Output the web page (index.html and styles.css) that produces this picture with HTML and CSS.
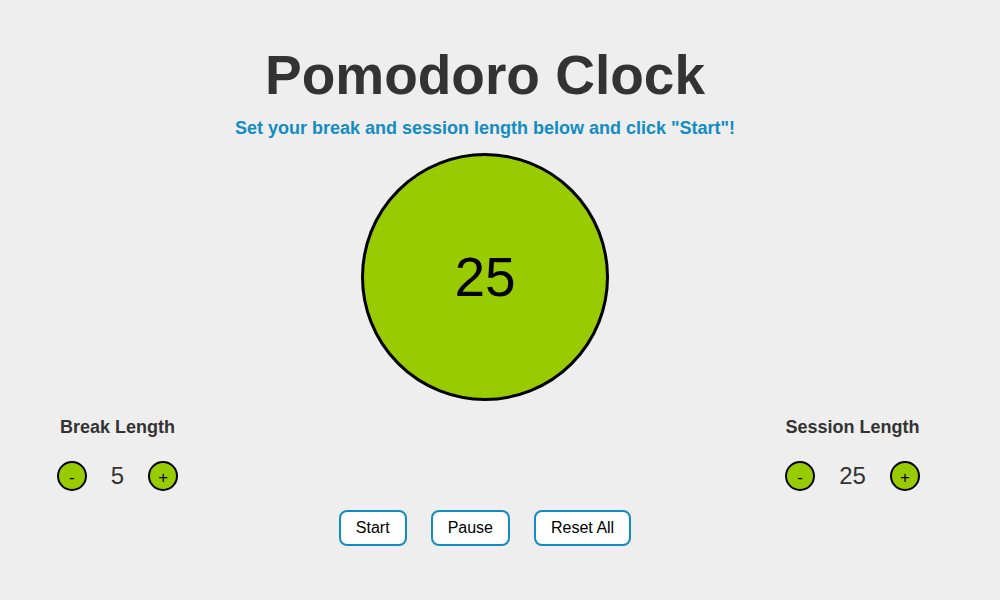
FILE: index.html
```html
<!DOCTYPE html>
<html>
<head>
<meta charset="utf-8">
<title>Pomodoro Clock</title>
<link rel="stylesheet" href="styles.css">
</head>
<body>
<div class="page">
  <h1 class="title">Pomodoro Clock</h1>
  <p class="subtitle">Set your break and session length below and click "Start"!</p>
  <div class="clock"><span class="clock-time">25</span></div>
  <div class="lengths">
    <div class="length">
      <div class="length-label">Break Length</div>
      <div class="controls">
        <button class="round-btn">-</button>
        <span class="value">5</span>
        <button class="round-btn">+</button>
      </div>
    </div>
    <div class="length">
      <div class="length-label">Session Length</div>
      <div class="controls">
        <button class="round-btn">-</button>
        <span class="value">25</span>
        <button class="round-btn">+</button>
      </div>
    </div>
  </div>
  <div class="actions">
    <button class="action-btn">Start</button>
    <button class="action-btn">Pause</button>
    <button class="action-btn">Reset All</button>
  </div>
</div>
</body>
</html>
```
FILE: styles.css
```css
html, body {
  margin: 0;
  padding: 0;
  background: #eeeeee;
}
body {
  font-family: "Liberation Sans", Arial, Helvetica, sans-serif;
  color: #333333;
}
.page {
  width: 970px;
  padding-top: 47px;
  display: flex;
  flex-direction: column;
  align-items: center;
}
.title {
  margin: 0;
  font-size: 55px;
  line-height: 56px;
  font-weight: bold;
  color: #333333;
}
.subtitle {
  margin: 14px 0 0;
  font-size: 18px;
  line-height: 22px;
  font-weight: bold;
  color: #138cc1;
}
.clock {
  margin-top: 14px;
  box-sizing: border-box;
  width: 248px;
  height: 248px;
  border: 3px solid #000000;
  border-radius: 50%;
  background: #99cc00;
  display: flex;
  align-items: center;
  justify-content: center;
}
.clock-time {
  font-size: 55px;
  color: #000000;
}
.lengths {
  width: 100%;
  margin-top: 16px;
  display: flex;
  justify-content: space-between;
}
.length {
  width: 235px;
  display: flex;
  flex-direction: column;
  align-items: center;
}
.length-label {
  font-size: 18px;
  line-height: 21px;
  font-weight: bold;
  color: #333333;
}
.controls {
  margin-top: 23px;
  display: flex;
  align-items: center;
  gap: 24px;
  height: 30px;
}
.round-btn {
  box-sizing: border-box;
  width: 30px;
  height: 30px;
  padding: 0;
  padding-top: 3px;
  border: 2px solid #000000;
  border-radius: 50%;
  background: #99cc00;
  color: #000000;
  font-family: "Liberation Sans", Arial, sans-serif;
  font-size: 17px;
  line-height: 1;
}
.value {
  font-size: 24px;
  color: #333333;
}
.actions {
  margin-top: 19px;
  display: flex;
  gap: 24px;
}
.action-btn {
  box-sizing: border-box;
  height: 36px;
  padding: 0 15px;
  border: 2px solid #138cc1;
  border-radius: 8px;
  background: #ffffff;
  color: #000000;
  font-family: "Liberation Sans", Arial, sans-serif;
  font-size: 16px;
}
```
